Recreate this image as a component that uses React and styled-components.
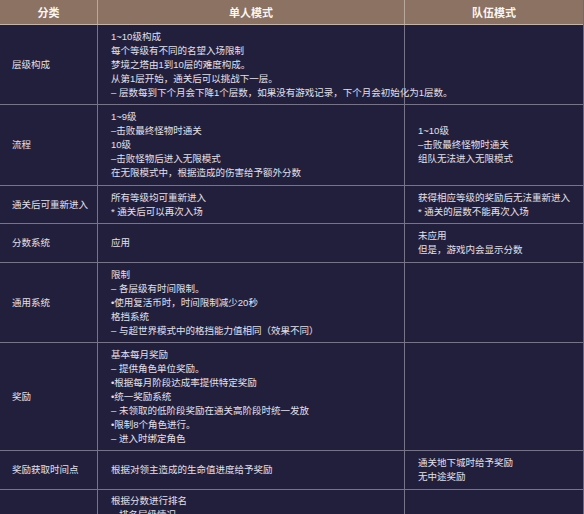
import React from "react";
import styled, { createGlobalStyle } from "styled-components";

const Global = createGlobalStyle`
  html, body { margin: 0; padding: 0; background: #221f3d; }
  body { font-family: "Liberation Sans", "Noto Sans CJK SC", sans-serif; }
  * { box-sizing: border-box; }
`;

const Table = styled.div`
  width: 584px;
  height: 514px;
  overflow: hidden;
  background: #221f3d;
  border-right: 1px solid #6c6880;
`;

const Row = styled.div`
  display: grid;
  grid-template-columns: 98px 307px 1fr;
  height: ${(p) => p.$h}px;
  border-bottom: 1px solid ${(p) => (p.$head ? "#c4b3a8" : "#77748a")};
  background: ${(p) => (p.$head ? "#8b7262" : "#221f3d")};
`;

const HeadCell = styled.div`
  display: flex;
  align-items: center;
  justify-content: center;
  color: #fbf6f2;
  font-weight: 700;
  font-size: 11px;
  border-right: ${(p) => (p.$last ? "none" : "1px solid #b9a89c")};
`;

const Cell = styled.div`
  display: flex;
  flex-direction: column;
  justify-content: center;
  padding-left: ${(p) => (p.$label ? 12 : 13)}px;
  color: #e2e0ea;
  font-size: 9.5px;
  line-height: 14px;
  white-space: nowrap;
  border-right: ${(p) => (p.$last ? "none" : "1px solid #77748a")};
`;

const TopCell = styled(Cell)`
  justify-content: flex-start;
  padding-top: 4px;
`;

const rows = [
  {
    h: 80,
    label: "层级构成",
    solo: [
      "1~10级构成",
      "每个等级有不同的名望入场限制",
      "梦境之塔由1到10层的难度构成。",
      "从第1层开始，通关后可以挑战下一层。",
      "– 层数每到下个月会下降1个层数，如果没有游戏记录，下个月会初始化为1层数。",
    ],
    team: [],
  },
  {
    h: 81,
    label: "流程",
    solo: [
      "1~9级",
      "–击败最终怪物时通关",
      "10级",
      "–击败怪物后进入无限模式",
      "在无限模式中，根据造成的伤害给予额外分数",
    ],
    team: ["1~10级", "–击败最终怪物时通关", "组队无法进入无限模式"],
  },
  {
    h: 38,
    label: "通关后可重新进入",
    solo: ["所有等级均可重新进入", "* 通关后可以再次入场"],
    team: ["获得相应等级的奖励后无法重新进入", "* 通关的层数不能再次入场"],
  },
  {
    h: 39,
    label: "分数系统",
    solo: ["应用"],
    team: ["未应用", "但是，游戏内会显示分数"],
  },
  {
    h: 80,
    label: "通用系统",
    solo: [
      "限制",
      "– 各层级有时间限制。",
      "•使用复活币时，时间限制减少20秒",
      "格挡系统",
      "– 与超世界模式中的格挡能力值相同（效果不同）",
    ],
    team: [],
  },
  {
    h: 108,
    label: "奖励",
    solo: [
      "基本每月奖励",
      "– 提供角色单位奖励。",
      "•根据每月阶段达成率提供特定奖励",
      "•统一奖励系统",
      "– 未领取的低阶段奖励在通关高阶段时统一发放",
      "•限制8个角色进行。",
      "– 进入时绑定角色",
    ],
    team: [],
  },
  {
    h: 39,
    label: "奖励获取时间点",
    solo: ["根据对领主造成的生命值进度给予奖励"],
    team: ["通关地下城时给予奖励", "无中途奖励"],
  },
];

const Lines = ({ items }) => items.map((t, i) => <span key={i}>{t}</span>);

export default function App() {
  return (
    <>
      <Global />
      <Table>
        <Row $head $h={25}>
          <HeadCell>分类</HeadCell>
          <HeadCell>单人模式</HeadCell>
          <HeadCell $last>队伍模式</HeadCell>
        </Row>
        {rows.map((r, i) => (
          <Row key={i} $h={r.h}>
            <Cell $label>{r.label}</Cell>
            <Cell>
              <Lines items={r.solo} />
            </Cell>
            <Cell $last>
              <Lines items={r.team} />
            </Cell>
          </Row>
        ))}
        <Row $h={60}>
          <TopCell $label></TopCell>
          <TopCell>
            <Lines items={["根据分数进行排名", "– 排名层级情况"]} />
          </TopCell>
          <TopCell $last></TopCell>
        </Row>
      </Table>
    </>
  );
}
